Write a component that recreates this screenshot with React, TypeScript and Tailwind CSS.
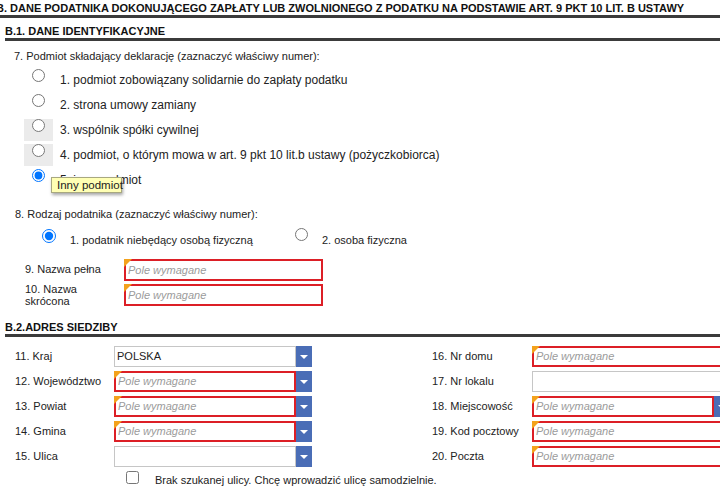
import React from "react";

const FONT = "font-['Liberation_Sans',Arial,sans-serif]";

interface RadioRowProps {
  label: string;
  name: string;
  checked?: boolean;
  shaded?: boolean;
}

const RadioRow: React.FC<RadioRowProps> = ({ label, name, checked, shaded }) => (
  <div className="flex h-[25px]">
    <div className={`ml-[24px] mt-[5px] flex h-[22px] w-[29px] justify-center ${shaded ? "bg-[#ebebeb]" : ""}`}>
      <input type="radio" name={name} defaultChecked={checked} className="h-[13px] w-[13px] accent-[#0075ff]" />
    </div>
    <span className="ml-[7px] mt-[8px] text-[12px] leading-[16px]">{label}</span>
  </div>
);

// little orange flag in the corner of a required field
const Flag = () => (
  <span className="pointer-events-none absolute left-[-2px] top-[-2px] h-0 w-0 border-r-[8px] border-t-[8px] border-r-transparent border-t-[#f3a21c]" />
);

const DropButton = () => (
  <div className="flex h-full w-[16px] shrink-0 items-center justify-center bg-[#4a6db6]">
    <span className="h-0 w-0 border-x-[4px] border-t-[4px] border-x-transparent border-t-white" />
  </div>
);

interface FieldProps {
  width: string;
  required?: boolean;
  value?: string;
  select?: boolean;
}

const Field: React.FC<FieldProps> = ({ width, required, value, select }) => (
  <div className={`flex h-[21px] ${width}`}>
    <div
      className={`relative flex min-w-0 flex-1 items-center ${
        required ? "border-2 border-[#dc1f26] pl-[2px]" : "border border-[#c6c6c6] pl-[2px]"
      }`}
    >
      {required && <Flag />}
      <input
        readOnly
        defaultValue={value}
        placeholder={required ? "Pole wymagane" : ""}
        className="w-full bg-transparent text-[11px] text-[#222] outline-none placeholder:italic placeholder:text-[#9b9b9b]"
      />
    </div>
    {select && <DropButton />}
  </div>
);

const AddrRow: React.FC<{ label: string; labelW: string; children: React.ReactNode }> = ({ label, labelW, children }) => (
  <div className="flex h-[21px] items-center">
    <span className={`${labelW} shrink-0`}>{label}</span>
    {children}
  </div>
);

export default function App() {
  return (
    <div className={`relative h-[498px] w-[720px] overflow-hidden bg-white text-[11px] text-[#222] ${FONT}`}>
      {/* section title */}
      <div className="border-b-[3px] border-[#3b3b3b] pt-[1px]">
        <h1 className="ml-[-4px] whitespace-nowrap text-[11px] font-bold leading-[14px] text-[#111]">
          B. DANE PODATNIKA DOKONUJĄCEGO ZAPŁATY LUB ZWOLNIONEGO Z PODATKU NA PODSTAWIE ART. 9 PKT 10 LIT. B USTAWY
        </h1>
      </div>

      <div className="ml-[5px] mt-[6px] border-b-[3px] border-[#3b3b3b]">
        <h2 className="text-[11px] font-bold leading-[14px] text-[#111]">B.1. DANE IDENTYFIKACYJNE</h2>
      </div>

      <p className="ml-[14px] mt-[7px] leading-[16px]">7. Podmiot składający deklarację (zaznaczyć właściwy numer):</p>
      <div className="relative">
        <RadioRow name="p7" label="1. podmiot zobowiązany solidarnie do zapłaty podatku" />
        <RadioRow name="p7" label="2. strona umowy zamiany" />
        <RadioRow name="p7" label="3. wspólnik spółki cywilnej" shaded />
        <RadioRow name="p7" label="4. podmiot, o którym mowa w art. 9 pkt 10 lit.b ustawy (pożyczkobiorca)" shaded />
        <RadioRow name="p7" label="5. inny podmiot" checked />
        {/* hover tooltip over option 5 */}
        <div className="absolute left-[51px] top-[113px] h-[16px] w-[71px] whitespace-nowrap border border-[#a8a880] bg-[#ffffb4] pl-[5px] text-[11.5px] leading-[14px] text-[#222] shadow-[1px_2px_3px_rgba(0,0,0,0.35)]">
          Inny podmiot
        </div>
      </div>

      <p className="ml-[15px] mt-[17px] leading-[16px]">8. Rodzaj podatnika (zaznaczyć właściwy numer):</p>
      <div className="flex h-[35px]">
        <div className="ml-[42px] flex w-[253px]">
          <input type="radio" name="p8" defaultChecked className="mt-[7px] h-[14px] w-[14px] shrink-0 accent-[#0075ff]" />
          <span className="ml-[14px] mt-[10px] leading-[16px]">1. podatnik niebędący osobą fizyczną</span>
        </div>
        <div className="flex">
          <input type="radio" name="p8" className="mt-[6px] h-[13px] w-[13px] shrink-0" />
          <span className="ml-[14px] mt-[10px] leading-[16px]">2. osoba fizyczna</span>
        </div>
      </div>

      <div className="flex h-[25px]">
        <span className="ml-[25px] mt-[4px] w-[99px] leading-[16px]">9. Nazwa pełna</span>
        <div className="mt-[2px]">
          <Field width="w-[199px] h-[22px]" required />
        </div>
      </div>
      <div className="flex h-[25px]">
        <span className="ml-[25px] mt-[1px] w-[99px] leading-[12px]">
          10. Nazwa
          <br />
          skrócona
        </span>
        <div className="mt-[2px]">
          <Field width="w-[199px] h-[22px]" required />
        </div>
      </div>

      <div className="ml-[5px] mt-[13px] border-b-[3px] border-[#3b3b3b]">
        <h2 className="text-[11px] font-bold leading-[14px] text-[#111]">B.2.ADRES SIEDZIBY</h2>
      </div>

      <div className="mt-[9px] flex">
        <div className="ml-[15px] flex w-[297px] flex-col gap-[4px]">
          <AddrRow label="11. Kraj" labelW="w-[99px]">
            <Field width="w-[198px]" value="POLSKA" select />
          </AddrRow>
          <AddrRow label="12. Województwo" labelW="w-[99px]">
            <Field width="w-[198px]" required select />
          </AddrRow>
          <AddrRow label="13. Powiat" labelW="w-[99px]">
            <Field width="w-[198px]" required select />
          </AddrRow>
          <AddrRow label="14. Gmina" labelW="w-[99px]">
            <Field width="w-[198px]" required select />
          </AddrRow>
          <AddrRow label="15. Ulica" labelW="w-[99px]">
            <Field width="w-[198px]" select />
          </AddrRow>
          <div className="flex items-start">
            <input type="checkbox" className="ml-[111px] h-[13px] w-[13px] shrink-0" />
            <span className="ml-[16px] mt-[1px] whitespace-nowrap leading-[16px]">
              Brak szukanej ulicy. Chcę wprowadzić ulicę samodzielnie.
            </span>
          </div>
        </div>

        <div className="ml-[120px] flex flex-col gap-[4px]">
          <AddrRow label="16. Nr domu" labelW="w-[100px]">
            <Field width="w-[200px]" required />
          </AddrRow>
          <AddrRow label="17. Nr lokalu" labelW="w-[100px]">
            <Field width="w-[200px]" />
          </AddrRow>
          <AddrRow label="18. Miejscowość" labelW="w-[100px]">
            <Field width="w-[198px]" required select />
          </AddrRow>
          <AddrRow label="19. Kod pocztowy" labelW="w-[100px]">
            <Field width="w-[200px]" required />
          </AddrRow>
          <AddrRow label="20. Poczta" labelW="w-[100px]">
            <Field width="w-[200px]" required />
          </AddrRow>
        </div>
      </div>
    </div>
  );
}
